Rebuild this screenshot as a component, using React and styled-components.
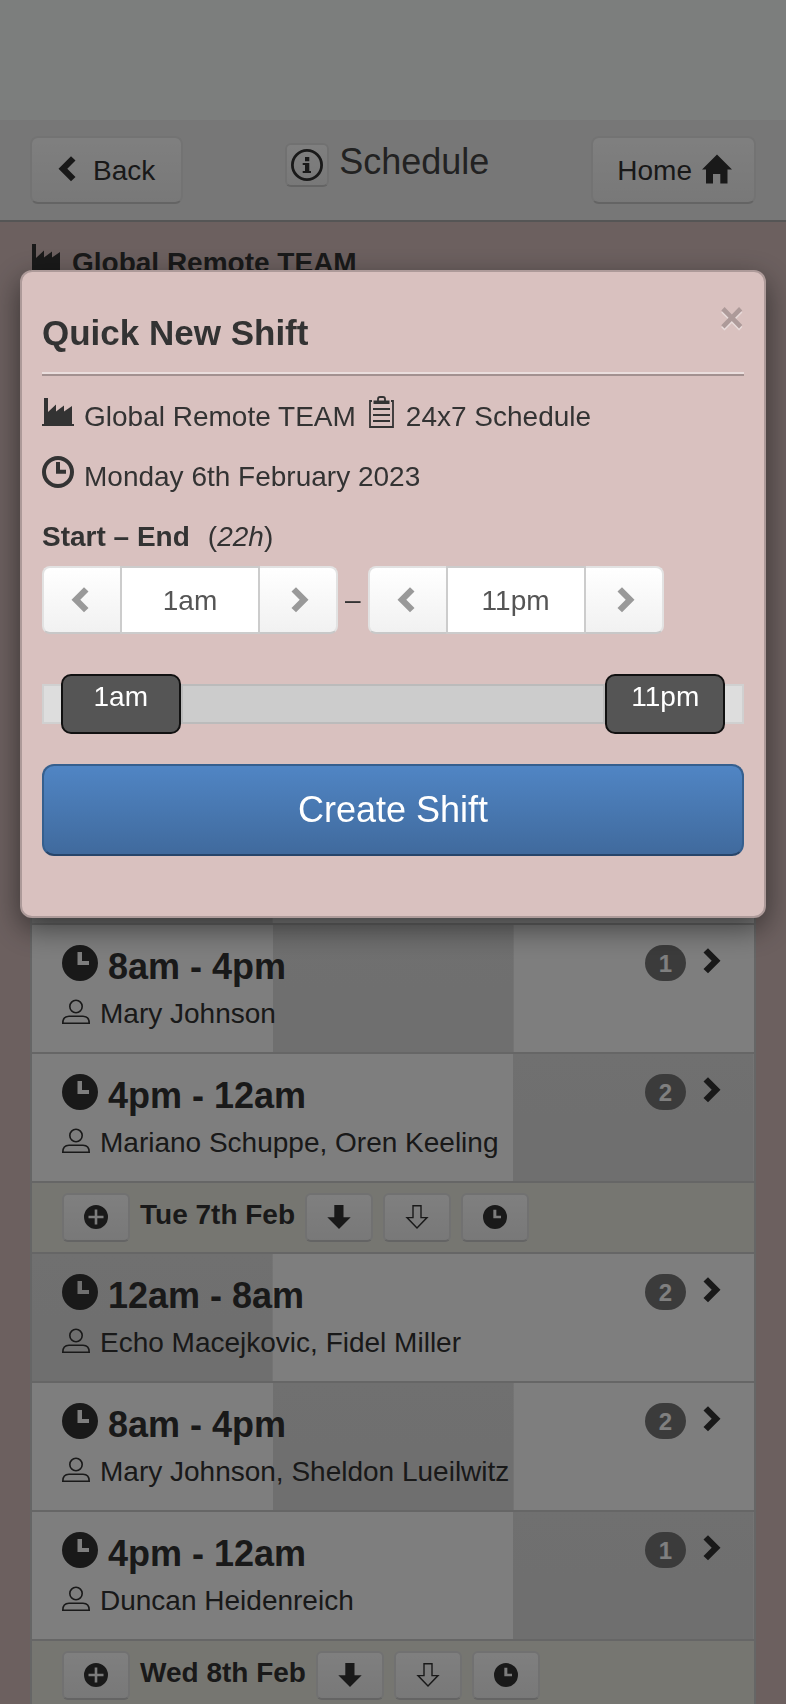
import React, { useState } from 'react'
import styled, { createGlobalStyle, css } from 'styled-components'

const GlobalStyle = createGlobalStyle`
  * {
    box-sizing: border-box;
  }
  body {
    margin: 0;
    font-family: 'Liberation Sans', Arial, sans-serif;
    font-size: 28px;
    line-height: 42px;
    color: #333;
  }
  button, input {
    font: inherit;
    color: inherit;
  }
  h1, h2, h3, p {
    margin: 0;
    font-size: inherit;
  }
  svg {
    display: block;
    flex: none;
    fill: currentColor;
  }
`

const raised = css`
  border: 2px solid #e2e2e2;
  border-bottom-color: #c8c8c8;
  background: linear-gradient(#fff, #f1f1f1);
  cursor: pointer;
`

const Page = styled.div`
  height: 100vh;
  overflow: hidden;
  padding-top: 120px;
  background: #f8fdfa;
`

const Header = styled.header`
  display: flex;
  justify-content: space-between;
  align-items: flex-start;
  padding: 16px 30px;
  background: #efefef;
  border-bottom: 2px solid #aaa;
`

const NavButton = styled.button`
  ${raised}
  display: flex;
  align-items: center;
  gap: ${(props) => props.$gap}px;
  height: 68px;
  padding: 2px ${(props) => props.$right}px 0 ${(props) => props.$left}px;
  border-radius: 8px;
  border-color: #e6e6e6;
  border-bottom-color: #c8c8c8;

  svg {
    margin-bottom: 4px;
  }
`

const Title = styled.div`
  display: flex;
  gap: 10px;
  padding-top: 7px;

  h1 {
    font-size: 36px;
    font-weight: normal;
    line-height: 38px;
    color: #444;
  }
`

const InfoButton = styled.button`
  ${raised}
  width: 44px;
  height: 44px;
  padding: 4px;
  border-radius: 6px;
`

const Main = styled.main`
  min-height: 100%;
  padding: 20px 30px;
  background: #d9c1bf;
`

const TeamName = styled.h2`
  display: flex;
  gap: 10px;
  height: 64px;
`

const List = styled.ul`
  margin: 488px 0 0;
  padding: 0;
  list-style: none;
  border: 2px solid #ccc;
`

const shadeStart = { night: 0, day: 1, evening: 2 }

const ShiftRow = styled.li`
  display: flex;
  justify-content: space-between;
  align-items: flex-start;
  min-height: 129px;
  padding: 20px 33px 0 30px;
  border-bottom: 2px solid #ccc;
  background-color: #fcfcfc;
  background-image: linear-gradient(#e0e0e0, #dedede);
  background-repeat: no-repeat;
  background-size: calc(100% / 3) 100%;
  background-position: ${(props) => shadeStart[props.$part] * 50}% 0;
`

const ShiftTime = styled.h3`
  display: flex;
  gap: 10px;
  font-size: 36px;
  line-height: 44px;
`

const People = styled.p`
  display: flex;
  gap: 10px;
  padding-top: 4px;

  svg {
    margin-top: 6px;
  }
`

const Count = styled.div`
  display: flex;
  gap: 17px;

  svg {
    margin-top: 3px;
  }
`

const Badge = styled.span`
  min-width: 41px;
  height: 36px;
  border-radius: 20px;
  background: #777;
  color: #fff;
  font-size: 24px;
  font-weight: bold;
  line-height: 38px;
  text-align: center;
`

const DayRow = styled.li`
  display: flex;
  gap: 10px;
  padding: 10px 30px;
  border-bottom: 2px solid #ccc;
  background: #ecede2;

  h3 {
    line-height: 44px;
  }
`

const DayButton = styled.button`
  ${raised}
  display: flex;
  align-items: center;
  justify-content: center;
  width: 68px;
  height: 49px;
  padding: 0 0 2px;
  border-radius: 6px;
`

const Backdrop = styled.div`
  position: fixed;
  inset: 0;
  padding: 270px 20px 0;
  background: rgba(0, 0, 0, 0.5);
`

const Modal = styled.section`
  padding: 20px 20px 60px;
  border: 2px solid #ad9a99;
  border-radius: 12px;
  background: #d9c1bf;
  box-shadow: 0 10px 30px rgba(0, 0, 0, 0.5);
`

const ModalHead = styled.div`
  display: flex;
  justify-content: space-between;
  align-items: flex-start;
  height: 80px;
  padding-top: 16px;

  h2 {
    font-size: 35px;
    line-height: 50px;
  }
`

const Close = styled.button`
  padding: 0;
  border: 0;
  background: none;
  color: #ad9a99;
  font-size: 42px;
  font-weight: bold;
  line-height: 20px;
  text-shadow: 0 2px 0 #e9dcdb;
  cursor: pointer;
`

const Rule = styled.hr`
  height: 4px;
  margin: 0 0 20px;
  border: 0;
  border-top: 2px solid #eadedd;
  background: #a39190;
`

const Info = styled.p`
  display: flex;
  gap: 10px;
  height: 60px;

  span {
    margin-right: 3px;
  }
`

const StartEnd = styled.div`
  display: flex;
  gap: 18px;
  height: 50px;
`

const Times = styled.div`
  display: flex;
  align-items: center;
  gap: 7px;
  margin-bottom: 50px;
`

const StepperBox = styled.div`
  display: flex;
  height: 68px;

  button {
    ${raised}
    display: flex;
    align-items: center;
    justify-content: center;
    width: 78px;
    padding: 0;
    color: #999;
  }
  button:first-child {
    padding-right: 4px;
    border-right: 0;
    border-radius: 8px 0 0 8px;
  }
  button:last-child {
    padding-left: 4px;
    border-left: 0;
    border-radius: 0 8px 8px 0;
  }
  input {
    width: 140px;
    padding: 2px 0 0;
    border: 2px solid #ccc;
    border-radius: 0;
    background: #fff;
    color: #555;
    text-align: center;
  }
`

const Slider = styled.div`
  position: relative;
  height: 40px;
  margin-bottom: 40px;
  border: 2px solid #d0d0d0;
  background: #ddd;
`

const Connect = styled.div`
  position: absolute;
  top: -2px;
  bottom: -2px;
  border: 2px solid #bbb;
  background: #ccc;
`

const Range = styled.input`
  position: absolute;
  top: -12px;
  left: -8px;
  width: calc(100% + 16px);
  height: 60px;
  margin: 0;
  appearance: none;
  background: none;
  pointer-events: none;

  &::-webkit-slider-thumb {
    appearance: none;
    width: 120px;
    height: 60px;
    border: 2px solid #111;
    border-radius: 10px;
    background: #555;
    pointer-events: auto;
    cursor: pointer;
  }
`

const HandleText = styled.span`
  position: absolute;
  top: -10px;
  width: 120px;
  color: #fff;
  text-align: center;
  pointer-events: none;
`

const CreateButton = styled.button`
  width: 100%;
  height: 92px;
  border: 2px solid #355f8e;
  border-bottom-color: #27456a;
  border-radius: 12px;
  background: linear-gradient(#5085c4, #406a9d);
  color: #fff;
  font-size: 36px;
  cursor: pointer;
`

const Chevron = ({ right }) => (
  <svg width="18" height="26" viewBox="0 0 18 26">
    <path
      d={
        right
          ? 'M17.5 12.7L5 0.2L0.5 4.6L8.7 12.7L0.5 20.9L5 25.3Z'
          : 'M0.5 12.7L13 0.2L17.5 4.6L9.3 12.7L17.5 20.9L13 25.3Z'
      }
    />
  </svg>
)

const HomeIcon = () => (
  <svg width="30" height="30" viewBox="0 0 30 30">
    <path d="M15 0.5L30 15.5H25.5V29.5H18.3V20H11V29.5H4V15.5H0Z" />
  </svg>
)

const InfoIcon = () => (
  <svg width="32" height="32" viewBox="0 0 32 32">
    <circle cx="16" cy="16" r="14.6" fill="none" stroke="currentColor" strokeWidth="2.8" />
    <path d="M14 8h4.3v4.2H14zM11.7 14h6.6v8H20v2h-8.3v-2H14v-6h-2.3z" />
  </svg>
)

const FactoryIcon = () => (
  <svg width="32" height="32" viewBox="0 0 32 32">
    <path d="M2 2H6V16L14 8.5V15.5L22 9.5V15.5L30 10V28H32V30H0V28H2Z" />
  </svg>
)

const ClipboardIcon = () => (
  <svg width="27" height="32" viewBox="0 0 27 32">
    <path
      d="M3 5H1V31H24V5H22M4 13H21M4 19H21M4 25H21M9 5V3Q9 1 11 1H14Q16 1 16 3V5"
      fill="none"
      stroke="currentColor"
      strokeWidth="1.8"
    />
    <path d="M4.5 4.5H20.5V8H4.5Z" />
  </svg>
)

const ClockIcon = () => (
  <svg width="32" height="32" viewBox="0 0 32 32">
    <circle cx="16" cy="16" r="14" fill="none" stroke="currentColor" strokeWidth="4" />
    <path d="M14 6h4v7.7h6v4H14z" />
  </svg>
)

const SolidClock = ({ size }) => (
  <svg width={size} height={size} viewBox="0 0 36 36">
    <path
      fillRule="evenodd"
      d="M18 0a18 18 0 1 0 0 36a18 18 0 1 0 0-36zM15.5 7H20v9h7v4H15.5z"
    />
  </svg>
)

const PlusIcon = () => (
  <svg width="24" height="24" viewBox="0 0 24 24">
    <path
      fillRule="evenodd"
      d="M12 0a12 12 0 1 0 0 24a12 12 0 1 0 0-24zM10.7 4.5h2.6v6.2h6.2v2.6h-6.2v6.2h-2.6v-6.2H4.5v-2.6h6.2z"
    />
  </svg>
)

const ArrowDown = ({ outline }) => (
  <svg width="24" height="24" viewBox="0 0 24 24">
    {outline ? (
      <path
        d="M8 0.8H16V12.6H22L12 23L2 12.6H8Z"
        fill="none"
        stroke="currentColor"
        strokeWidth="1.4"
      />
    ) : (
      <path d="M7.3 0H16.5V12.3H23.7L12 24L0.3 12.3H7.3Z" />
    )}
  </svg>
)

const PersonIcon = () => (
  <svg width="28" height="26" viewBox="0 0 28 26">
    <g fill="none" stroke="currentColor" strokeWidth="1.6">
      <circle cx="14" cy="7.5" r="6.2" />
      <path d="M0.8 24.2C0.8 19.5 3 17.3 7 17.3H21C25 17.3 27.2 19.5 27.2 24.2Z" />
    </g>
  </svg>
)

const Shift = (props) => {
  return (
    <ShiftRow $part={props.part}>
      <div>
        <ShiftTime>
          <SolidClock size={36} />
          {props.time}
        </ShiftTime>
        <People>
          <PersonIcon />
          {props.people}
        </People>
      </div>
      <Count>
        <Badge>{props.count}</Badge>
        <Chevron right />
      </Count>
    </ShiftRow>
  )
}

const Day = (props) => {
  return (
    <DayRow>
      <DayButton aria-label="Add shift">
        <PlusIcon />
      </DayButton>
      <h3>{props.name}</h3>
      <DayButton aria-label="Copy day down">
        <ArrowDown />
      </DayButton>
      <DayButton aria-label="Copy empty shifts down">
        <ArrowDown outline />
      </DayButton>
      <DayButton aria-label="Set times">
        <SolidClock size={24} />
      </DayButton>
    </DayRow>
  )
}

const formatHour = (hour) => {
  const h = hour % 24
  return `${h % 12 || 12}${h < 12 ? 'am' : 'pm'}`
}

const Stepper = ({ label, value, onChange }) => {
  return (
    <StepperBox>
      <button aria-label={`${label} earlier`} onClick={() => onChange(value - 1)}>
        <Chevron />
      </button>
      <input type="text" aria-label={label} value={formatHour(value)} readOnly />
      <button aria-label={`${label} later`} onClick={() => onChange(value + 1)}>
        <Chevron right />
      </button>
    </StepperBox>
  )
}

// left edge of a 120px handle; the travel reaches 8px past the track on both sides
const handleLeft = (hour) => `calc((100% - 104px) * ${hour / 24} - 8px)`

const QuickShift = () => {
  const [start, setStart] = useState(1)
  const [end, setEnd] = useState(23)

  const changeStart = (value) => setStart(Math.max(0, Math.min(value, end - 1)))
  const changeEnd = (value) => setEnd(Math.min(24, Math.max(value, start + 1)))

  return (
    <Modal role="dialog" aria-labelledby="quick-title">
      <ModalHead>
        <h2 id="quick-title">Quick New Shift</h2>
        <Close aria-label="Close">×</Close>
      </ModalHead>
      <Rule />
      <Info>
        <FactoryIcon />
        <span>Global Remote TEAM</span>
        <ClipboardIcon />
        <span>24x7 Schedule</span>
      </Info>
      <Info>
        <ClockIcon />
        <span>Monday 6th February 2023</span>
      </Info>
      <StartEnd>
        <b>Start – End</b>
        <span>
          (<i>{end - start}h</i>)
        </span>
      </StartEnd>
      <Times>
        <Stepper label="Start" value={start} onChange={changeStart} />
        –
        <Stepper label="End" value={end} onChange={changeEnd} />
      </Times>
      <Slider>
        <Connect
          style={{
            left: `calc(${handleLeft(start)} + 120px)`,
            right: `calc(100% - ${handleLeft(end)})`,
          }}
        />
        <Range
          type="range"
          aria-label="Start time"
          min="0"
          max="24"
          value={start}
          onChange={(e) => changeStart(Number(e.target.value))}
        />
        <Range
          type="range"
          aria-label="End time"
          min="0"
          max="24"
          value={end}
          onChange={(e) => changeEnd(Number(e.target.value))}
        />
        <HandleText style={{ left: handleLeft(start) }}>{formatHour(start)}</HandleText>
        <HandleText style={{ left: handleLeft(end) }}>{formatHour(end)}</HandleText>
      </Slider>
      <CreateButton>Create Shift</CreateButton>
    </Modal>
  )
}

const App = () => {
  return (
    <Page>
      <GlobalStyle />
      <Header>
        <NavButton $gap={17} $left={26} $right={26}>
          <Chevron />
          Back
        </NavButton>
        <Title>
          <InfoButton aria-label="Info">
            <InfoIcon />
          </InfoButton>
          <h1>Schedule</h1>
        </Title>
        <NavButton $gap={10} $left={24} $right={22}>
          Home
          <HomeIcon />
        </NavButton>
      </Header>
      <Main>
        <TeamName>
          <FactoryIcon />
          Global Remote TEAM
        </TeamName>
        <List>
          <ShiftRow $part="night" />
          <Shift part="day" time="8am - 4pm" people="Mary Johnson" count={1} />
          <Shift part="evening" time="4pm - 12am" people="Mariano Schuppe, Oren Keeling" count={2} />
          <Day name="Tue 7th Feb" />
          <Shift part="night" time="12am - 8am" people="Echo Macejkovic, Fidel Miller" count={2} />
          <Shift part="day" time="8am - 4pm" people="Mary Johnson, Sheldon Lueilwitz" count={2} />
          <Shift part="evening" time="4pm - 12am" people="Duncan Heidenreich" count={1} />
          <Day name="Wed 8th Feb" />
        </List>
      </Main>
      <Backdrop>
        <QuickShift />
      </Backdrop>
    </Page>
  )
}

export default App
